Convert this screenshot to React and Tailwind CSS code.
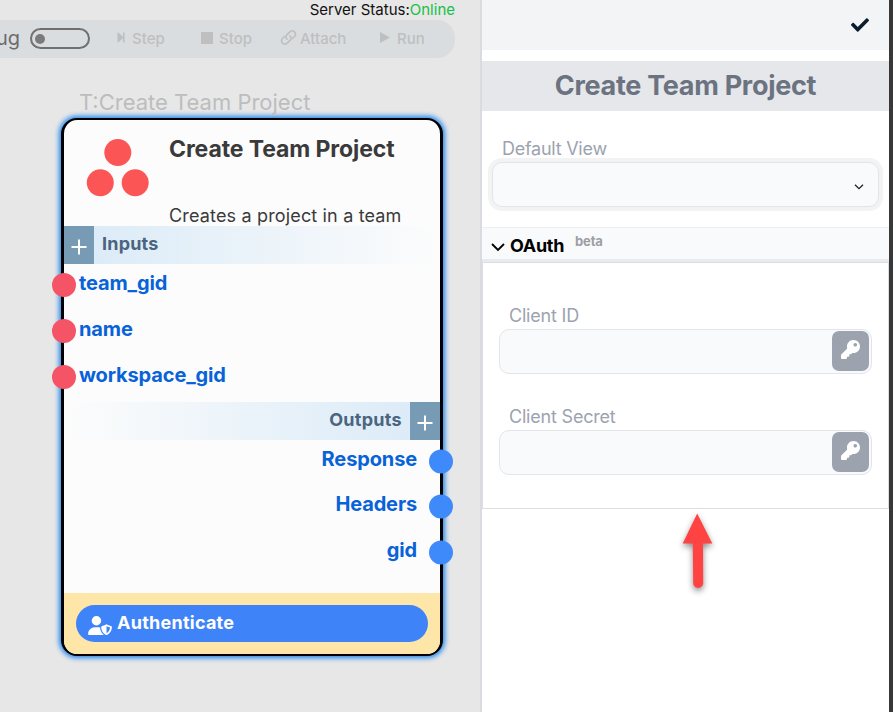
import { FaCheck, FaKey, FaStepForward } from "react-icons/fa";
import { FaUserShield } from "react-icons/fa6";

function ToolButton({ icon, label, className }) {
  return (
    <div className={`flex h-5 items-center text-[15px] font-medium leading-5 text-[#bfbfbf] ${className}`}>
      {icon}
      <span>{label}</span>
    </div>
  );
}

function LinkIcon() {
  return (
    <svg viewBox="0 0 24 24" className="-ml-px mb-[3px] mr-[3px] size-[17px]" fill="none" stroke="currentColor" strokeWidth="2.2" strokeLinecap="round">
      <path d="M10 14.5a4.6 4.6 0 0 1 0-6.5l4-4a4.6 4.6 0 0 1 6.5 6.5l-3 3" />
      <path d="M14 9.5a4.6 4.6 0 0 1 0 6.5l-4 4a4.6 4.6 0 0 1-6.5-6.5l3-3" />
    </svg>
  );
}

function Toolbar() {
  return (
    <div className="flex h-[38px] w-[455px] items-start rounded-r-[18px] bg-[#d9dde0]">
      <div className="flex w-[20px] shrink-0 justify-end overflow-hidden pt-[6px] text-[20px] leading-6 text-[#6b6b6b]">
        <span>Debug</span>
      </div>
      <div className="ml-[10px] mt-[8px] flex h-[21px] w-[60px] shrink-0 items-center rounded-full border-2 border-[#707070] pl-[3px]">
        <div className="size-[10px] rounded-full bg-[#7b7b7b]" />
      </div>
      <ToolButton className="ml-[26px] mt-[9px] w-[85px]" icon={<FaStepForward className="mb-[3px] mr-[6px] h-[13px] w-[10px]" />} label="Step" />
      <ToolButton className="mt-[9px] w-[80px]" icon={<div className="mb-[3px] mr-[6px] size-[12px] bg-[#bfbfbf]" />} label="Stop" />
      <ToolButton className="mt-[9px] w-[99px]" icon={<LinkIcon />} label="Attach" />
      <ToolButton className="mt-[9px]" icon={<div className="mb-[3px] mr-[7px] h-[11px] w-[10px] bg-[#bfbfbf] [clip-path:polygon(0_0,100%_50%,0_100%)]" />} label="Run" />
    </div>
  );
}

function Plus() {
  return (
    <div className="flex h-full w-[30px] shrink-0 items-center justify-center bg-[#789bb5] pt-[3px]">
      <svg viewBox="0 0 16 16" className="size-[16px]" stroke="#fff" strokeWidth="2">
        <path d="M8 .5v15M.5 8h15" />
      </svg>
    </div>
  );
}

function InputPort({ label }) {
  return (
    <div className="-ml-[12px] flex h-[46px] items-center">
      <div className="mt-[4px] size-[24px] rounded-full bg-[#f55366]" />
      <span className="ml-[3px] text-[20px] font-bold leading-6 tracking-[-0.13px] text-[#0862d8]">{label}</span>
    </div>
  );
}

function OutputPort({ label }) {
  return (
    <div className="-mr-[13px] flex h-[45.5px] items-center justify-end">
      <span className="mr-[12px] text-[20px] font-bold leading-6 tracking-[-0.13px] text-[#0862d8]">{label}</span>
      <div className="mt-[4px] size-[24px] rounded-full bg-[#3f8afb]" />
    </div>
  );
}

function Node() {
  return (
    <div className="ml-[61px] mt-[3px] flex h-[538px] w-[382px] flex-col rounded-[16px] border-x-[3px] border-y-2 border-black bg-[#fcfcfc] shadow-[0_0_5px_2px_#1f86ee]">
      <div className="flex h-[106px] shrink-0">
        <svg viewBox="0 0 64 60" className="ml-[22px] mt-[18px] h-[60px] w-[64px]" fill="#fb5555">
          <circle cx="31.8" cy="14.5" r="13.5" />
          <circle cx="14.3" cy="44.8" r="13.5" />
          <circle cx="49.2" cy="44.8" r="13.5" />
        </svg>
        <div className="ml-[19px] whitespace-nowrap text-[#3a3a3a]">
          <div className="mt-[15px] text-[23px] font-bold leading-7 tracking-[-0.1px]">Create Team Project</div>
          <div className="mt-[41px] text-[18px] leading-6 tracking-[0.16px]">Creates a project in a team</div>
        </div>
      </div>
      <div className="flex h-[38px] shrink-0 bg-linear-to-r from-[#d9eaf7] to-[#fcfcfc]">
        <Plus />
        <span className="ml-[8px] mt-[6px] text-[18px] font-bold leading-6 tracking-[0.2px] text-[#4b6580]">Inputs</span>
      </div>
      <div className="h-[138px] shrink-0 -translate-y-[4px]">
        <InputPort label="team_gid" />
        <InputPort label="name" />
        <InputPort label="workspace_gid" />
      </div>
      <div className="flex h-[38px] shrink-0 justify-end bg-linear-to-l from-[#d9eaf7] to-[#fcfcfc]">
        <span className="mr-[8px] mt-[6px] text-[18px] font-bold leading-6 tracking-[0.3px] text-[#4b6580]">Outputs</span>
        <Plus />
      </div>
      <div className="h-[153px] shrink-0 -translate-y-[3.6px]">
        <OutputPort label="Response" />
        <OutputPort label="Headers" />
        <OutputPort label="gid" />
      </div>
      <div className="flex-1 rounded-b-[13px] bg-[#fee6a8] px-[12px] pt-[12px]">
        <div className="flex h-[37px] items-center rounded-full bg-[#3f83f8] pl-[12px] text-white">
          <FaUserShield className="mt-[3px] h-[19px] w-[24px]" />
          <span className="-mt-[2px] ml-[5px] text-[18px] font-bold tracking-[0.25px]">Authenticate</span>
        </div>
      </div>
    </div>
  );
}

function Field({ label, className }) {
  return (
    <div className={className}>
      <div className="ml-[10px] text-[18px] leading-6 tracking-[-0.2px] text-[#9ca3af]">{label}</div>
      <div className="mt-[1px] flex h-[45px] w-[373px] justify-end rounded-[10px] border border-[#e2e5ea] bg-[#f9fafb] pr-[2px] pt-[1px]">
        <div className="flex h-[40px] w-[37px] justify-center rounded-[7px] bg-[#9ca3af] pt-[9px]">
          <FaKey className="size-[19px] text-white" />
        </div>
      </div>
    </div>
  );
}

function Panel() {
  return (
    <div className="flex w-[407px] shrink-0 flex-col bg-white">
      <div className="flex h-[50px] shrink-0 justify-end bg-[#f3f4f6] pr-[20px] pt-[16px]">
        <FaCheck className="size-[18px] text-[#0c1b2e]" />
      </div>
      <div className="mt-[11px] flex h-[50px] shrink-0 items-center justify-center bg-[#e5e7eb] text-[27px] font-bold tracking-[-0.3px] text-[#6b7280]">
        Create Team Project
      </div>
      <div className="ml-[20px] mt-[26px] text-[18px] leading-6 tracking-[-0.25px] text-[#9ca3af]">Default View</div>
      <div className="ml-[10px] mt-[1px] flex h-[45px] w-[387px] shrink-0 items-center justify-end rounded-[10px] border border-[#e2e5ea] bg-[#f9fafb] pr-[14px] shadow-[0_0_0_4px_#f3f3f3]">
        <svg viewBox="0 0 10 6" className="mt-[4px] h-[6px] w-[10px]" fill="none" stroke="#222" strokeWidth="1.3">
          <path d="M1 .7l4 4 4-4" />
        </svg>
      </div>
      <div className="mt-[20px] flex h-[35px] shrink-0 border-b-[3px] border-t border-b-[#e9eaed] border-t-[#eceef1] bg-[#f9fafb]">
        <svg viewBox="0 0 14 9" className="ml-[9px] mt-[15px] h-[9px] w-[14px]" fill="none" stroke="#000" strokeWidth="1.8">
          <path d="M1 1l6 6 6-6" />
        </svg>
        <span className="ml-[5px] mt-[6px] text-[18px] font-bold leading-6 tracking-[-0.3px] text-black">OAuth</span>
        <span className="ml-[11px] mt-[3px] text-[13px] font-bold leading-5 tracking-[-0.2px] text-[#9ca0a5]">beta</span>
      </div>
      <div className="h-[247px] shrink-0 border border-[#dcdee2] pl-[16px] pt-[41px]">
        <Field label="Client ID" />
        <Field label="Client Secret" className="mt-[31px]" />
      </div>
      <svg viewBox="0 0 40 86" className="ml-[195px] mt-[1px] h-[86px] w-[40px] drop-shadow-[0_3px_3px_rgba(0,0,0,0.45)]">
        <path d="M20.200 3.500L35.300 33.500H26L26.200 73a5 5 0 0 1-10 0L15.800 33.500H5.700z" fill="#ff4343" />
      </svg>
    </div>
  );
}

export default function App() {
  return (
    <div className="flex h-[712px] w-[893px] overflow-hidden bg-[#e7e7e7] font-['Inter',sans-serif]">
      <div className="w-[480px] shrink-0">
        <div className="flex h-[20px] w-[455px] justify-end text-[15px] leading-5 text-[#111]">
          Server Status:<span className="text-[#16bf45]">Online</span>
        </div>
        <Toolbar />
        <div className="ml-[79px] mt-[30px] h-[27px] text-[22px] leading-7 text-[#bdbdbd]">T:Create Team Project</div>
        <Node />
      </div>
      <div className="w-[2px] shrink-0 bg-[#d9dbe0]" />
      <Panel />
      <div className="flex-1 bg-[#383838]" />
    </div>
  );
}
